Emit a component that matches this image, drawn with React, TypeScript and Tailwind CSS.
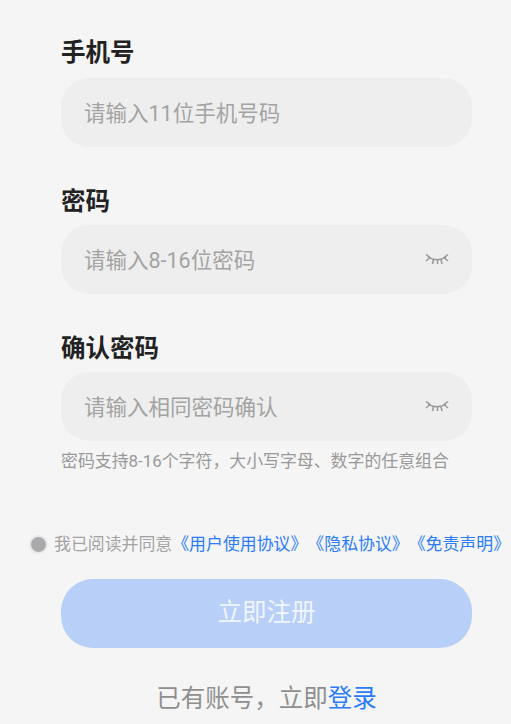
import React from "react";

const font = { fontFamily: '"Roboto", "Noto Sans CJK SC", sans-serif' };

function EyeClosed() {
  return (
    <svg width="24" height="14" viewBox="0 0 24 14" fill="none" stroke="#999999" strokeWidth="1.5">
      <path d="M3 3 C8 6.5 16 6.5 21 3" />
      <path d="M1 0.5 L5.5 3.8" />
      <path d="M23 0.5 L18.5 3.8" />
      <path d="M1 7 L4.5 4" />
      <path d="M23 7 L19.5 4" />
      <path d="M8.5 5.5 L7.5 10" />
      <path d="M12.5 6 L12.5 10" />
      <path d="M16 5.5 L17 10" />
    </svg>
  );
}

type FieldProps = {
  label: string;
  placeholder: string;
  eye?: boolean;
  labelClass: string;
};

function Field({ label, placeholder, eye, labelClass }: FieldProps) {
  return (
    <div>
      <div className={`text-[24.5px] leading-[32px] font-bold text-[#222222] ${labelClass}`}>{label}</div>
      <div className="h-[69px] rounded-[28px] bg-[#eeeeee] pl-[23px] pr-[23px] pt-[3px] flex items-center justify-between">
        <span className="text-[21.5px] text-[#a3a3a3]">{placeholder}</span>
        {eye && <EyeClosed />}
      </div>
    </div>
  );
}

export default function App() {
  return (
    <div className="w-[511px] h-[724px] bg-[#f5f5f5] overflow-hidden relative" style={font}>
      <div className="px-[61px] pr-[39px] pt-[37px]">
        <Field label="手机号" placeholder="请输入11位手机号码" labelClass="mb-[9px]" />
        <div className="mt-[39px]">
          <Field label="密码" placeholder="请输入8-16位密码" eye labelClass="mb-[7px]" />
        </div>
        <div className="mt-[39px]">
          <Field label="确认密码" placeholder="请输入相同密码确认" eye labelClass="mb-[7px]" />
        </div>
        <div className="mt-[9px] text-[16.9px] leading-[22px] text-[#999999] whitespace-nowrap">
          密码支持8-16个字符，大小写字母、数字的任意组合
        </div>
      </div>
      <div className="mt-[59px] pl-[29px] flex items-center whitespace-nowrap text-[16.9px] leading-[26px] [text-spacing-trim:space-all]">
        <span className="w-[19px] h-[19px] rounded-full bg-[#aaaaaa] border-2 border-[#e6e8ee] mr-[6px] shrink-0" />
        <span className="text-[#a3a3a3]">我已阅读并同意</span>
        <span className="text-[#2b7cf6]">《用户使用协议》《隐私协议》《免责声明》</span>
      </div>
      <div className="mx-[61px] w-[411px] mt-[22px] h-[69px] rounded-[32px] bg-[#b8cff8] flex items-center justify-center text-[24.5px] text-[#f1f5fd]">
        立即注册
      </div>
      <div className="mt-[31px] text-center text-[24.5px] leading-[40px] text-[#8f8f8f] pl-[22px] whitespace-nowrap">
        已有账号，立即<span className="text-[#2b7cf6]">登录</span>
      </div>
    </div>
  );
}
